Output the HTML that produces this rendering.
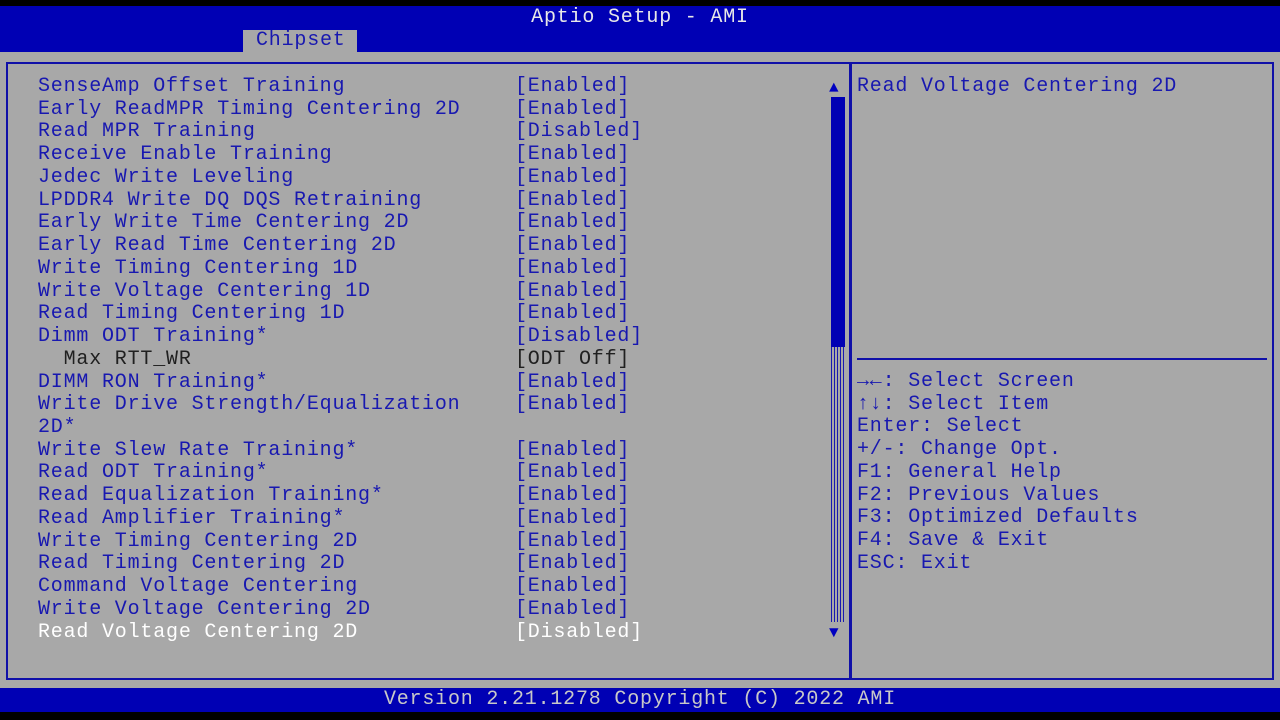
<!DOCTYPE html><html><head><style>
body{margin:0;width:1280px;height:720px;background:#000;position:relative;overflow:hidden;font-family:"Liberation Mono",monospace;font-size:20px;letter-spacing:0.8px;}
.a{position:absolute;white-space:pre;line-height:22.73px}
.b{color:#1818b0}
</style></head><body>
<div style="position:absolute;left:0;top:6px;width:1280px;height:46px;background:#0000b4"></div>
<div class="a" style="left:0;width:1280px;top:7px;text-align:center;color:#e8e8e8">Aptio Setup - AMI</div>
<div style="position:absolute;left:243px;top:30px;width:114px;height:22px;background:#a8a8a8"></div>
<div class="a b" style="left:256px;top:30px">Chipset</div>
<div style="position:absolute;left:0;top:52px;width:1280px;height:636px;background:#a8a8a8"></div>
<div style="position:absolute;left:6px;top:62px;width:1264px;height:614px;border:2px solid #1010a8"></div>
<div style="position:absolute;left:849px;top:62px;width:3px;height:616px;background:#1010a8"></div>
<div style="position:absolute;left:857px;top:358px;width:410px;height:2px;background:#1010a8"></div>
<div style="position:absolute;left:831px;top:97px;width:14px;height:525px;background:repeating-linear-gradient(90deg,#1818b0 0 1px,#a8a8a8 1px 3px)"></div>
<div style="position:absolute;left:831px;top:97px;width:14px;height:250px;background:#0000b4"></div>
<div class="a" style="left:829px;top:77px;color:#0000c0;font-size:16px;letter-spacing:0">▲</div>
<div class="a" style="left:829px;top:622px;color:#0000c0;font-size:16px;letter-spacing:0">▼</div>
<div class="a b" style="left:38px;top:76px">SenseAmp Offset Training
Early ReadMPR Timing Centering 2D
Read MPR Training
Receive Enable Training
Jedec Write Leveling
LPDDR4 Write DQ DQS Retraining
Early Write Time Centering 2D
Early Read Time Centering 2D
Write Timing Centering 1D
Write Voltage Centering 1D
Read Timing Centering 1D
Dimm ODT Training*
<span style="color:#202020">  Max RTT_WR</span>
DIMM RON Training*
Write Drive Strength/Equalization
2D*
Write Slew Rate Training*
Read ODT Training*
Read Equalization Training*
Read Amplifier Training*
Write Timing Centering 2D
Read Timing Centering 2D
Command Voltage Centering
Write Voltage Centering 2D
<span style="color:#fff">Read Voltage Centering 2D</span></div>
<div class="a b" style="left:515px;top:76px">[Enabled]
[Enabled]
[Disabled]
[Enabled]
[Enabled]
[Enabled]
[Enabled]
[Enabled]
[Enabled]
[Enabled]
[Enabled]
[Disabled]
<span style="color:#202020">[ODT Off]</span>
[Enabled]
[Enabled]

[Enabled]
[Enabled]
[Enabled]
[Enabled]
[Enabled]
[Enabled]
[Enabled]
[Enabled]
<span style="color:#fff">[Disabled]</span></div>
<div class="a b" style="left:857px;top:76px">Read Voltage Centering 2D</div>
<div class="a b" style="left:857px;top:371px"><b>→←</b>: Select Screen
<b>↑↓</b>: Select Item
Enter: Select
+/-: Change Opt.
F1: General Help
F2: Previous Values
F3: Optimized Defaults
F4: Save &amp; Exit
ESC: Exit</div>
<div style="position:absolute;left:0;top:688px;width:1280px;height:24px;background:#0000b4"></div>
<div class="a" style="left:0;width:1280px;top:689px;text-align:center;color:#c8c8c8">Version 2.21.1278 Copyright (C) 2022 AMI</div>
</body></html>
